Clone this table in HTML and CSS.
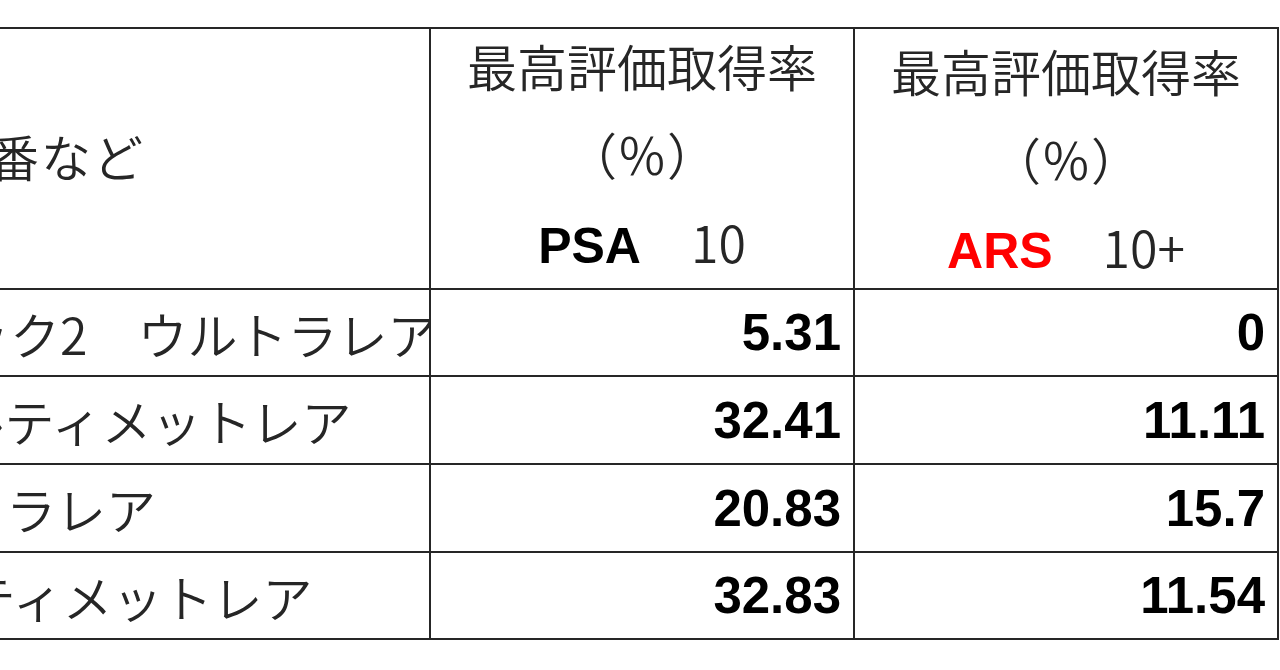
FILE: index.html
```html
<!DOCTYPE html>
<html lang="ja">
<head>
<meta charset="utf-8">
<title>最高評価取得率</title>
<link rel="stylesheet" href="styles.css">
</head>
<body>
<div class="sheet">
  <div class="cell name head-name"><span class="clip h0">型番など</span></div>
  <div class="cell head">
    <div class="hl">最高評価取得率</div>
    <div class="hl">（％）</div>
    <div class="hl"><b class="psa">PSA</b>　10</div>
  </div>
  <div class="cell head head3">
    <div class="hl">最高評価取得率</div>
    <div class="hl">（％）</div>
    <div class="hl"><b class="ars">ARS</b>　10+</div>
  </div>

  <div class="cell name"><span class="clip r1">パック2　ウルトラレア</span></div>
  <div class="cell num">5.31</div>
  <div class="cell num">0</div>

  <div class="cell name"><span class="clip r2">アルティメットレア</span></div>
  <div class="cell num">32.41</div>
  <div class="cell num">11.11</div>

  <div class="cell name"><span class="clip r3">ウルトラレア</span></div>
  <div class="cell num">20.83</div>
  <div class="cell num">15.7</div>

  <div class="cell name"><span class="clip r4">アルティメットレア</span></div>
  <div class="cell num">32.83</div>
  <div class="cell num">11.54</div>
</div>
</body>
</html>
```
FILE: styles.css
```css
* { box-sizing: border-box; }
html, body {
  margin: 0;
  padding: 0;
  background: #ffffff;
  overflow: hidden;
}
body {
  font-family: "Noto Sans CJK JP", "Noto Sans", sans-serif;
  color: #262626;
}
.sheet {
  margin-top: 27px;
  display: grid;
  grid-template-columns: 431px 424px 424px;
  grid-template-rows: 261px 87px 88px 88px 87px;
  border-top: 2px solid #262626;
  width: 1279px;
}
.cell {
  border-right: 2px solid #262626;
  border-bottom: 2px solid #262626;
  overflow: hidden;
  white-space: nowrap;
}
.name {
  display: flex;
  align-items: center;
  font-size: 50px;
  font-weight: 350;
  line-height: 1;
}
.clip { display: block; }
.h0 { text-indent: -63px; letter-spacing: 2px; padding-bottom: 8px; }
.r1 { text-indent: -90px; }
.r2 { text-indent: -95px; }
.r3 { text-indent: -144px; }
.r4 { text-indent: -134px; }
.head {
  display: flex;
  flex-direction: column;
  justify-content: center;
  align-items: center;
  font-size: 50px;
  font-weight: 350;
  line-height: 88px;
  padding-bottom: 6px;
}
.head3 { padding-bottom: 0; padding-top: 4px; }
.hl { text-align: center; }
.psa, .ars {
  font-family: "Liberation Sans", Arial, sans-serif;
  font-weight: 700;
  font-size: 50px;
  color: #000;
}
.ars { color: #ff0000; }
.num {
  display: flex;
  align-items: center;
  justify-content: flex-end;
  padding-right: 12px;
  font-family: "Liberation Sans", Arial, sans-serif;
  font-weight: 700;
  font-size: 51px;
  color: #000;
  line-height: 1;
}
```
